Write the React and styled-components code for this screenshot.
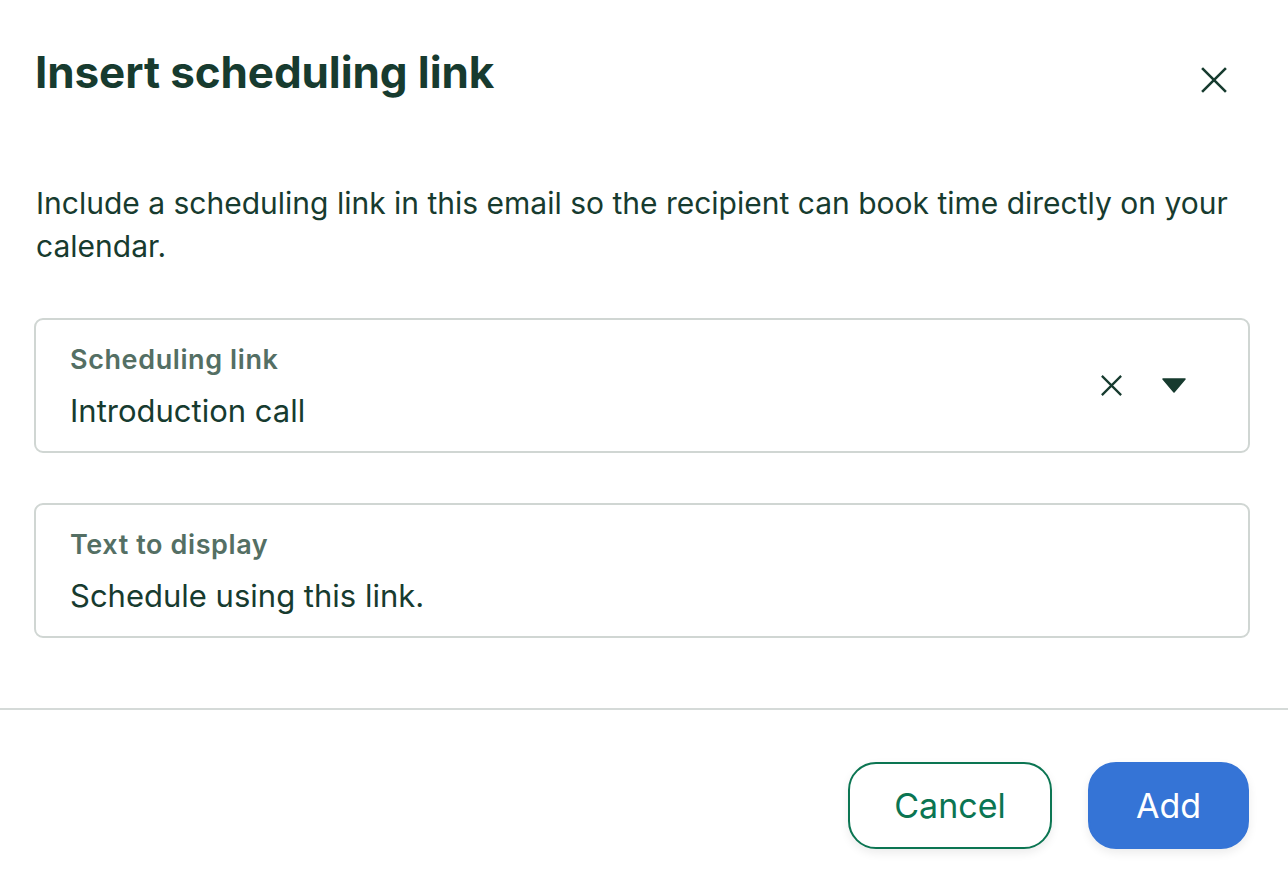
import React from "react";
import styled, { createGlobalStyle } from "styled-components";

const Global = createGlobalStyle`
  html, body { margin: 0; padding: 0; background: #ffffff; }
  body { font-family: Inter, "Noto Sans", "Liberation Sans", sans-serif; color: #173b2f; }
  * { box-sizing: border-box; }
`;

const Dialog = styled.div`
  width: 1288px;
  height: 880px;
  display: flex;
  flex-direction: column;
  background: #fff;
`;

const Header = styled.div`
  display: flex;
  align-items: flex-start;
  justify-content: space-between;
  padding: 44px 54px 0 35px;
`;

const Title = styled.h1`
  margin: 0;
  font-size: 44px;
  line-height: 56px;
  font-weight: 700;
  letter-spacing: -0.1px;
  color: #173b2f;
`;

const IconButton = styled.button`
  border: none;
  background: none;
  padding: 0;
  margin-top: 16px;
  width: 40px;
  height: 40px;
  display: flex;
  align-items: center;
  justify-content: center;
  color: #173b2f;
  cursor: pointer;
`;

const Body = styled.div`
  display: flex;
  flex-direction: column;
  padding: 0 38px 0 34px;
  margin-top: 82px;
`;

const Description = styled.p`
  margin: 0 0 0 2px;
  font-size: 30px;
  line-height: 43px;
  color: #173b2f;
`;

const Field = styled.div`
  margin-top: ${(p) => p.$mt}px;
  height: 135px;
  border: 2px solid #d0d6d3;
  border-radius: 9px;
  display: flex;
  align-items: center;
  padding: 0 62px 0 34px;
`;

const FieldText = styled.div`
  flex: 1;
  display: flex;
  flex-direction: column;
`;

const Label = styled.div`
  font-size: 27px;
  line-height: 36px;
  font-weight: 600;
  letter-spacing: 0.6px;
  color: #546f64;
`;

const Value = styled.div`
  margin-top: 15px;
  font-size: 31px;
  line-height: 36px;
  color: #173b2f;
`;

const Actions = styled.div`
  display: flex;
  align-items: center;
  gap: 40px;
  color: #173b2f;
`;

const Divider = styled.hr`
  margin: 70px 0 0 0;
  border: none;
  border-top: 2px solid #d5dad8;
`;

const Footer = styled.div`
  display: flex;
  justify-content: flex-end;
  gap: 36px;
  padding: 52px 39px 0 0;
`;

const Button = styled.button`
  height: 87px;
  width: ${(p) => p.$w}px;
  border-radius: 28px;
  font-family: inherit;
  font-size: 34px;
  font-weight: 400;
  cursor: pointer;
  box-shadow: 0 4px 10px rgba(0, 0, 0, 0.08);
  border: 2px solid ${(p) => (p.$primary ? "#3574d6" : "#0b7552")};
  background: ${(p) => (p.$primary ? "#3574d6" : "#ffffff")};
  color: ${(p) => (p.$primary ? "#ffffff" : "#0b7552")};
`;

const CloseIcon = ({ size = 28, stroke = 2.6 }) => (
  <svg width={size} height={size} viewBox="0 0 24 24" fill="none">
    <path d="M1 1 L23 23 M23 1 L1 23" stroke="currentColor" strokeWidth={stroke} strokeLinecap="butt" />
  </svg>
);

const Caret = () => (
  <svg width="24" height="15" viewBox="0 0 24 15">
    <path d="M1 1 H23 L12 14 Z" fill="#173b2f" stroke="#173b2f" strokeWidth="1.5" strokeLinejoin="round" />
  </svg>
);

export default function App() {
  return (
    <Dialog>
      <Global />
      <Header>
        <Title>Insert scheduling link</Title>
        <IconButton aria-label="Close">
          <CloseIcon size={26} stroke={2.4} />
        </IconButton>
      </Header>
      <Body>
        <Description>
          Include a scheduling link in this email so the recipient can book time directly on your calendar.
        </Description>
        <Field $mt={50}>
          <FieldText>
            <Label>Scheduling link</Label>
            <Value>Introduction call</Value>
          </FieldText>
          <Actions>
            <CloseIcon size={21} stroke={2.6} />
            <Caret />
          </Actions>
        </Field>
        <Field $mt={50}>
          <FieldText>
            <Label>Text to display</Label>
            <Value>Schedule using this link.</Value>
          </FieldText>
        </Field>
      </Body>
      <Divider />
      <Footer>
        <Button $w={204}>Cancel</Button>
        <Button $primary $w={161}>Add</Button>
      </Footer>
    </Dialog>
  );
}
